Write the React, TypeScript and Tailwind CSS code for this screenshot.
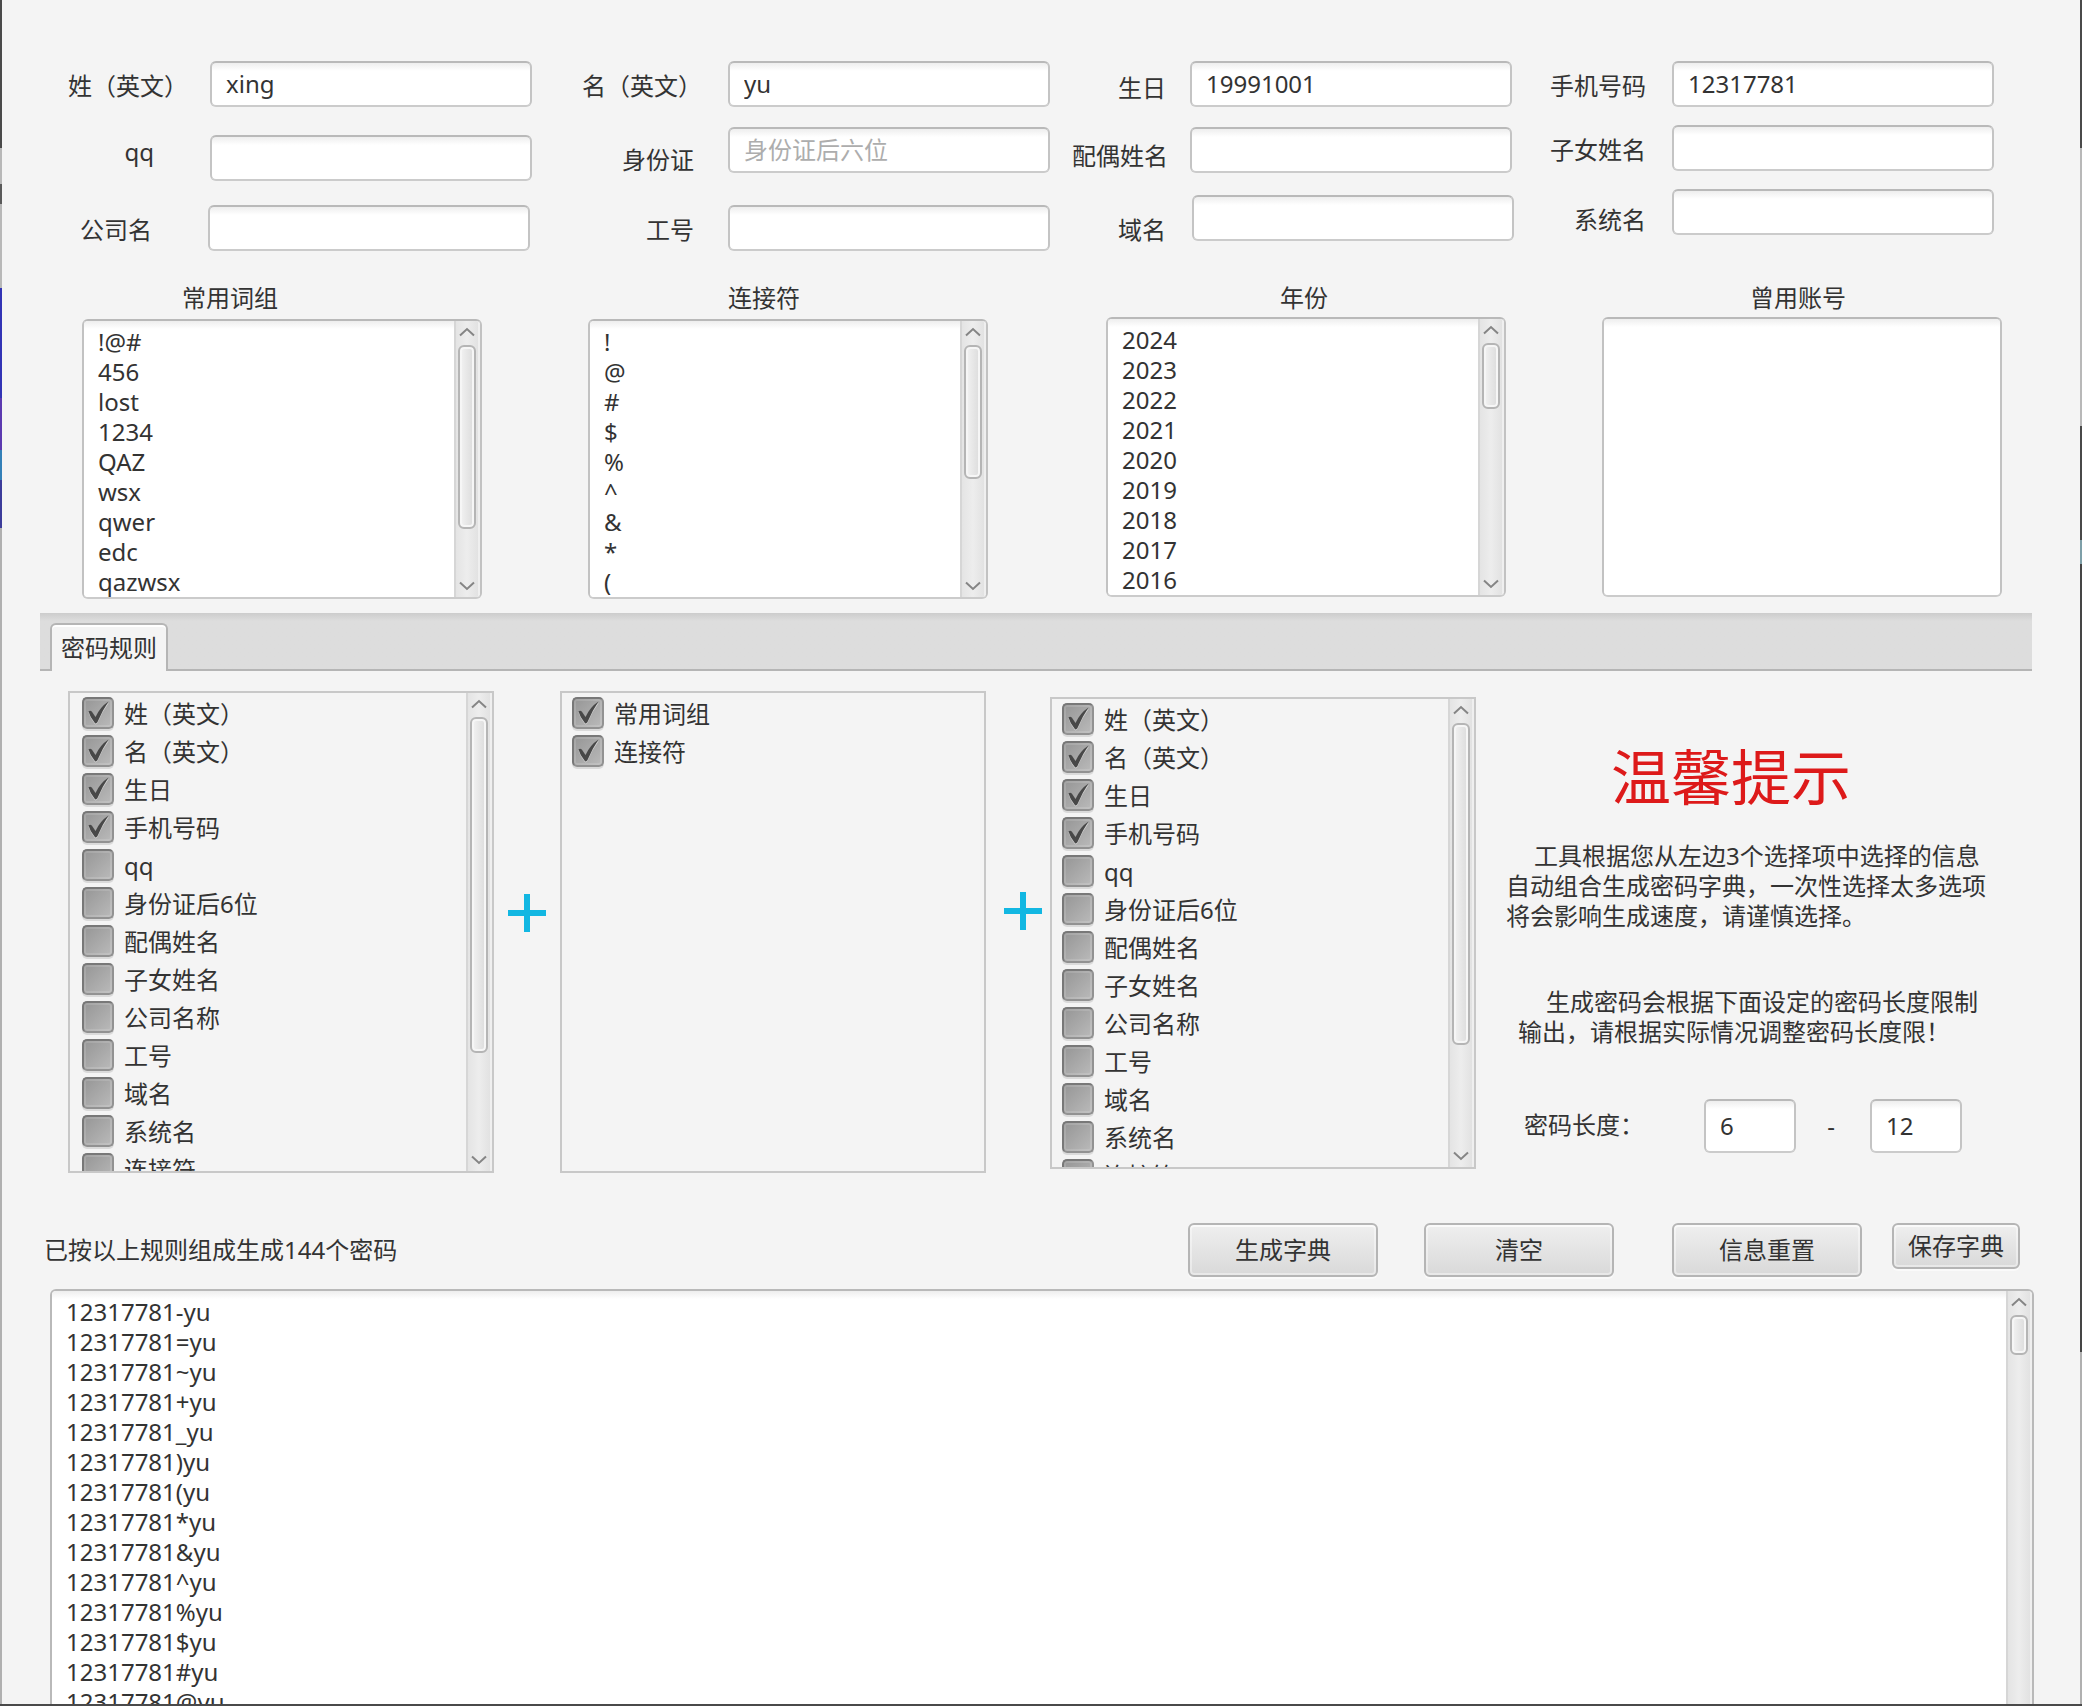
import { useState } from "react";
import type { ReactNode } from "react";

const PHRASES = ["!@#", "456", "lost", "1234", "QAZ", "wsx", "qwer", "edc", "qazwsx"];
const CONNECTORS = ["!", "@", "#", "$", "%", "^", "&", "*", "("];
const YEARS = ["2024", "2023", "2022", "2021", "2020", "2019", "2018", "2017", "2016"];
const RESULTS = ["-", "=", "~", "+", "_", ")", "(", "*", "&", "^", "%", "$", "#", "@"].map(
  (c) => `12317781${c}yu`,
);
const RULES = [
  "姓（英文）",
  "名（英文）",
  "生日",
  "手机号码",
  "qq",
  "身份证后6位",
  "配偶姓名",
  "子女姓名",
  "公司名称",
  "工号",
  "域名",
  "系统名",
  "连接符",
];

const INPUT =
  "rounded-md border-2 border-[#c4c4c4] border-t-[#b9b9b9] border-b-[#cbcbcb] bg-white bg-linear-to-b from-[#eeeeee] to-white to-[8px] px-3.5 pb-0.5 text-2xl outline-none placeholder:text-[#adadad]";

function Field({
  id,
  label,
  value = "",
  placeholder,
  lift = "pt-2",
  pad = "pr-[26px]",
}: {
  id: string;
  label: string;
  value?: string;
  placeholder?: string;
  lift?: string;
  pad?: string;
}) {
  return (
    <div className="flex h-[46px] justify-end">
      <label htmlFor={id} className={`flex-1 text-right leading-[34px] whitespace-nowrap ${lift} ${pad}`}>
        {label}
      </label>
      <input
        id={id}
        defaultValue={value}
        placeholder={placeholder}
        className={`h-full w-[322px] shrink-0 ${INPUT}`}
      />
    </div>
  );
}

function Arrow({ down = false }: { down?: boolean }) {
  return (
    <svg viewBox="0 0 16 10" className="h-2.5 w-4 shrink-0" fill="none" stroke="#858585" strokeWidth="2">
      <path d={down ? "M1 1.5 8 8 15 1.5" : "M1 8.5 8 2 15 8.5"} />
    </svg>
  );
}

function ScrollBar({ thumb, end = true }: { thumb: string; end?: boolean }) {
  return (
    <div className="flex shrink-0 bg-[#efefef] pr-0.5">
      <div className="flex w-6 flex-col items-center border-l-2 border-[#d6d6d6] bg-linear-to-r from-[#e4e4e4] via-[#ededed] to-[#e2e2e2] py-1.5">
        <Arrow />
        <div
          className={`mt-2 w-[18px] rounded-md border-2 border-[#b5b5b5] bg-linear-to-r from-[#f3f3f3] to-[#dbdbdb] shadow-[inset_0_0_0_2px_#f6f6f6] ${thumb}`}
        />
        <div className="flex-1" />
        {end && <Arrow down />}
      </div>
    </div>
  );
}

function ListBox({
  title,
  items,
  thumb,
  shift,
  gap = "mt-[3px]",
}: {
  title: string;
  items: string[];
  thumb?: string;
  shift: string;
  gap?: string;
}) {
  return (
    <section className="flex w-[400px] flex-col">
      <h2 className={`text-center leading-9 ${shift}`}>{title}</h2>
      <div
        className={`flex h-[280px] overflow-hidden rounded-md border-2 border-[#c2c2c2] border-t-[#b9b9b9] border-b-[#cbcbcb] bg-white ${gap}`}
      >
        <ul className="flex-1 bg-linear-to-b from-[#eeeeee] to-white to-[8px] px-3.5 pt-1.5">
          {items.map((t) => (
            <li key={t} className="h-[30px] leading-[30px]">
              {t}
            </li>
          ))}
        </ul>
        {thumb && <ScrollBar thumb={thumb} />}
      </div>
    </section>
  );
}

function Check({ label, on }: { label: string; on: boolean }) {
  const [checked, setChecked] = useState(on);
  return (
    <label className="flex h-[38px] shrink-0 items-start gap-2.5">
      <span className="relative h-[33px] w-8 shrink-0">
        <input
          type="checkbox"
          checked={checked}
          onChange={() => setChecked(!checked)}
          className="block h-8 w-8 appearance-none rounded-[5px] border-2 border-[#787878] border-r-[#929292] border-b-[#929292] bg-linear-to-br from-[#969696] to-[#bababa] shadow-[0_2px_0_#dadada,inset_0_0_0_2px_#ffffff22]"
        />
        {checked && (
          <svg viewBox="0 0 32 33" className="pointer-events-none absolute inset-0">
            <path d="M6.5 15.5Q8 13.5 9.8 15.5L13.5 21Q18 12 27 5.5Q20 15 15.5 26Q14 28.5 12.5 26.5Q8 21 6.5 15.5Z" fill="#d4d4d4" />
            <path d="M6.5 14.5Q8 12.8 9.8 14.5L13.5 20Q18 10 26.5 4.5Q20 14 15.5 25Q14 27.5 12.5 25.5Q8 20 6.5 14.5Z" fill="#484848" />
          </svg>
        )}
      </span>
      <span className="leading-[34px] whitespace-nowrap">{label}</span>
    </label>
  );
}

function CheckPanel({
  items,
  checked,
  size,
  thumb,
  inset = "pl-2.5",
}: {
  items: string[];
  checked: number;
  size: string;
  thumb?: string;
  inset?: string;
}) {
  return (
    <div className={`flex w-[426px] shrink-0 overflow-hidden border-2 border-[#c8c8c8] ${size}`}>
      <div className={`flex flex-1 flex-col overflow-hidden pt-1 ${inset}`}>
        {items.map((t, i) => (
          <Check key={t} label={t} on={i < checked} />
        ))}
      </div>
      {thumb && <ScrollBar thumb={thumb} />}
    </div>
  );
}

function Plus() {
  return (
    <svg viewBox="0 0 38 38" className="h-[38px] w-[38px]" stroke="#12b7e2" strokeWidth="6">
      <path d="M0 19H38M19 0V38" />
    </svg>
  );
}

function Btn({ children, size = "h-[54px] w-[190px]" }: { children: ReactNode; size?: string }) {
  return (
    <button
      type="button"
      className={`rounded-md border-2 border-[#b5b5b5] bg-linear-to-b from-[#efefef] to-[#d9d9d9] shadow-[inset_0_2px_0_#fafafa,inset_0_0_0_2px_#ffffff66,0_2px_0_#fafafa] ${size}`}
    >
      {children}
    </button>
  );
}

export default function App() {
  return (
    <div className="flex h-screen overflow-hidden border-b-2 border-[#4a4a4a] bg-[#f4f4f4] font-['Noto_Sans','Noto_Sans_CJK_SC',sans-serif] text-2xl text-[#333333]">
      <div className="flex w-0.5 shrink-0 flex-col">
        <div className="h-[148px] bg-[#4a4a4a]" />
        <div className="h-9 bg-[#b8b8b8]" />
        <div className="h-5 bg-[#5a5a5a]" />
        <div className="h-[84px] bg-[#b8b8b8]" />
        <div className="h-[110px] bg-[#3234b5]" />
        <div className="h-[52px] bg-[#5c3ab0]" />
        <div className="h-[30px] bg-[#3480b8]" />
        <div className="h-12 bg-[#3c3c9a]" />
        <div className="flex-1 bg-[#b0b0b0]" />
      </div>
      <main className="flex min-w-0 flex-1 flex-col pt-[61px]">
        <form className="flex pr-[86px]">
          <div className="flex w-[530px] flex-col">
            <Field id="surname" label="姓（英文）" value="xing" pad="pr-[22px]" />
            <div className="mt-7">
              <Field id="qq" label="qq" lift="pt-0" pad="pr-14" />
            </div>
            <div className="mt-6 pr-0.5">
              <Field id="company" label="公司名" pad="pr-14" />
            </div>
          </div>
          <div className="flex flex-1 flex-col">
            <Field id="given" label="名（英文）" value="yu" pad="pr-[26px]" />
            <div className="mt-5">
              <Field id="idcard" label="身份证" placeholder="身份证后六位" lift="pt-4" pad="pr-[34px]" />
            </div>
            <div className="mt-8">
              <Field id="jobno" label="工号" pad="pr-[34px]" />
            </div>
          </div>
          <div className="flex w-[462px] flex-col">
            <Field id="birthday" label="生日" value="19991001" lift="pt-2.5" pad="pr-6" />
            <div className="mt-5">
              <Field id="spouse" label="配偶姓名" lift="pt-3" pad="pr-[22px]" />
            </div>
            <div className="-mr-0.5 mt-[22px]">
              <Field id="domain" label="域名" lift="pt-[18px]" />
            </div>
          </div>
          <div className="flex w-[482px] flex-col">
            <Field id="phone" label="手机号码" value="12317781" />
            <div className="mt-[18px]">
              <Field id="child" label="子女姓名" />
            </div>
            <div className="mt-[18px]">
              <Field id="system" label="系统名" lift="pt-3.5" />
            </div>
          </div>
        </form>

        <div className="mt-[29px] flex justify-between pr-[78px] pl-20">
          <ListBox title="常用词组" items={PHRASES} thumb="h-[184px]" shift="pr-[104px]" />
          <div className="pl-2.5">
            <ListBox title="连接符" items={CONNECTORS} thumb="h-[134px]" shift="pr-12" />
          </div>
          <div className="pl-[22px]">
            <ListBox title="年份" items={YEARS} thumb="h-[66px]" shift="pr-1" gap="mt-px" />
          </div>
          <ListBox title="曾用账号" items={[]} shift="pr-2" gap="mt-px" />
        </div>

        <div className="mt-3.5 mr-12 ml-[38px] flex h-[58px] items-end border-b-2 border-[#b5b5b5] bg-linear-to-b from-[#cccccc] to-[#dddddd] to-[8px] pl-2.5">
          <button
            type="button"
            className="-mb-0.5 h-12 rounded-t-md border-2 border-b-0 border-[#b5b5b5] bg-[#f4f4f4] px-[9px] shadow-[inset_0_2px_0_#ffffff]"
          >
            密码规则
          </button>
        </div>

        <div className="mt-5 flex pr-[86px] pl-[66px]">
          <CheckPanel items={RULES} checked={4} size="h-[482px]" thumb="h-[336px]" inset="pl-3" />
          <div className="flex w-[66px] items-center justify-center pb-[38px]">
            <Plus />
          </div>
          <CheckPanel items={["常用词组", "连接符"]} checked={2} size="h-[482px]" />
          <div className="flex w-16 items-center justify-center pl-2.5 pb-[42px]">
            <Plus />
          </div>
          <div className="pt-1.5">
            <CheckPanel items={RULES} checked={4} size="h-[472px]" thumb="h-[322px]" />
          </div>
          <section className="flex flex-1 flex-col pt-[42px] pl-[30px]">
            <h1 className="pl-[105px] text-[60px] leading-[88px] text-[#dd1a1a]">温馨提示</h1>
            <p className="mt-5 leading-[30px] whitespace-nowrap">
              <span className="pl-7">工具根据您从左边3个选择项中选择的信息</span>
              <br />
              自动组合生成密码字典，一次性选择太多选项
              <br />
              将会影响生成速度，请谨慎选择。
            </p>
            <p className="mt-14 pl-3 leading-[30px] whitespace-nowrap">
              <span className="pl-7">生成密码会根据下面设定的密码长度限制</span>
              <br />
              输出，请根据实际情况调整密码长度限！
            </p>
            <div className="mt-[52px] flex items-center pl-[18px]">
              <label htmlFor="min-length" className="w-[180px] pb-0.5">
                密码长度：
              </label>
              <input id="min-length" defaultValue="6" className={`h-[54px] w-[92px] ${INPUT}`} />
              <span className="w-[74px] pr-1 text-center">-</span>
              <input
                id="max-length"
                aria-label="最大密码长度"
                defaultValue="12"
                className={`h-[54px] w-[92px] ${INPUT}`}
              />
            </div>
          </section>
        </div>

        <div className="mt-[50px] flex items-start pr-[60px] pl-[42px]">
          <p className="flex-1 pt-2.5 leading-[34px]">已按以上规则组成生成144个密码</p>
          <div className="flex items-start">
            <Btn>生成字典</Btn>
            <div className="ml-[46px]">
              <Btn>清空</Btn>
            </div>
            <div className="ml-[58px]">
              <Btn>信息重置</Btn>
            </div>
            <div className="ml-[30px]">
              <Btn size="h-[46px] w-32">保存字典</Btn>
            </div>
          </div>
        </div>

        <div className="mt-3 mr-[46px] ml-12 flex min-h-0 flex-1 overflow-hidden rounded-t-md border-2 border-b-0 border-[#b9b9b9] bg-white">
          <ul className="flex-1 bg-linear-to-b from-[#eeeeee] to-white to-[8px] px-3.5 pt-1.5">
            {RESULTS.map((t) => (
              <li key={t} className="h-[30px] leading-[30px]">
                {t}
              </li>
            ))}
          </ul>
          <ScrollBar thumb="h-10 shrink-0" end={false} />
        </div>
      </main>
      <div className="flex w-0.5 shrink-0 flex-col">
        <div className="h-[148px] bg-[#4a4a4a]" />
        <div className="h-[278px] bg-[#b8b8b8]" />
        <div className="h-[114px] bg-[#484848]" />
        <div className="h-6 bg-[#7e9fa8]" />
        <div className="h-[788px] bg-[#454545]" />
        <div className="flex-1 bg-[#b0b0b0]" />
      </div>
    </div>
  );
}
